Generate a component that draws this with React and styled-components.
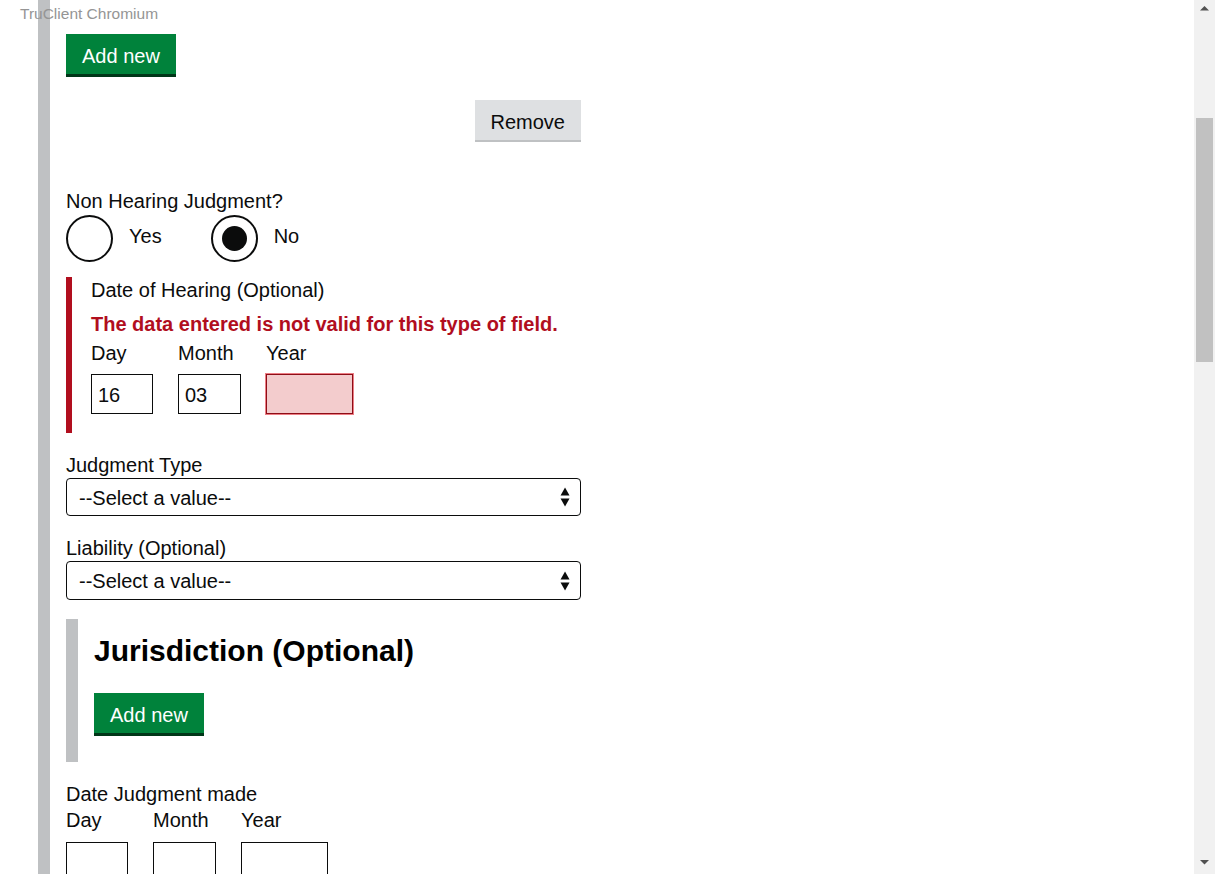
import React from "react";
import styled, { createGlobalStyle } from "styled-components";

const GlobalStyle = createGlobalStyle`
  html, body {
    margin: 0;
    padding: 0;
    height: 100%;
    overflow: hidden;
    background: #ffffff;
  }
  body {
    font-family: "Liberation Sans", Arial, sans-serif;
    color: #0b0c0c;
  }
  #root { height: 100%; }
  * { box-sizing: border-box; }
`;

const Page = styled.div`
  display: flex;
  height: 100vh;
  overflow: hidden;
`;

const Main = styled.main`
  flex: 1;
  position: relative;
  padding-left: 38px;
  overflow: hidden;
`;

const Watermark = styled.div`
  position: absolute;
  left: 20px;
  top: 5px;
  font-size: 15.5px;
  line-height: 18px;
  color: #959595;
  z-index: 2;
  pointer-events: none;
`;

const Collection = styled.div`
  height: 100%;
  border-left: 12px solid #bfc1c3;
  padding: 34px 0 0 16px;
`;

const Column = styled.div`
  width: 515px;
  display: flex;
  flex-direction: column;
  align-items: flex-start;
`;

const PrimaryButton = styled.button`
  height: 40px;
  margin-top: ${(p) => p.$mt || 0}px;
  padding: 4px 16px 0;
  border: none;
  border-radius: 0;
  background: #00823b;
  box-shadow: 0 3px 0 #003618;
  color: #ffffff;
  font-family: inherit;
  font-size: 20px;
  line-height: 36px;
  cursor: pointer;
`;

const ButtonRow = styled.div`
  align-self: stretch;
  display: flex;
  justify-content: flex-end;
  margin-top: ${(p) => p.$mt || 0}px;
`;

const SecondaryButton = styled.button`
  height: 40px;
  padding: 4px 16px 0;
  border: none;
  border-radius: 0;
  background: #dee0e2;
  box-shadow: 0 2px 0 #bfc1c3;
  color: #0b0c0c;
  font-family: inherit;
  font-size: 20px;
  line-height: 36px;
  cursor: pointer;
`;

const Label = styled.div`
  margin-top: ${(p) => p.$mt || 0}px;
  font-size: 20px;
  line-height: 25px;
  color: #0b0c0c;
`;

const RadioGroup = styled.div`
  height: 48px;
  display: flex;
  align-items: center;
  gap: 49px;
`;

const RadioItem = styled.label`
  display: flex;
  align-items: center;
  gap: 16px;
  font-size: 20px;
  line-height: 25px;
`;

const RadioText = styled.span`
  padding-bottom: 4px;
`;

const RadioCircle = styled.span`
  width: 47px;
  height: 47px;
  border: 2px solid #0b0c0c;
  border-radius: 50%;
  display: flex;
  align-items: center;
  justify-content: center;
  background: #fff;

  &::after {
    content: "";
    width: 25px;
    height: 25px;
    border-radius: 50%;
    background: #0b0c0c;
    display: ${(p) => (p.$checked ? "block" : "none")};
  }
`;

const ErrorGroup = styled.div`
  align-self: stretch;
  margin-top: 15px;
  border-left: 6px solid #b10e1e;
  padding: 1px 0 19px 19px;
`;

const ErrorMessage = styled.div`
  margin-top: 9px;
  font-size: 20px;
  line-height: 25px;
  font-weight: 700;
  color: #b10e1e;
`;

const DateRow = styled.div`
  display: flex;
  gap: 25px;
  margin-top: ${(p) => p.$mt || 0}px;
`;

const DateItem = styled.div`
  display: flex;
  flex-direction: column;
  gap: ${(p) => p.$gap}px;
`;

const TextInput = styled.input`
  width: ${(p) => p.$w}px;
  height: 40px;
  margin: 0;
  padding: 2px 6px 0;
  border: 1px solid ${(p) => (p.$error ? "#8e0d17" : "#0b0c0c")};
  box-shadow: ${(p) => (p.$error ? "0 0 0 1px #ec7d84" : "none")};
  border-radius: 0;
  background: ${(p) => (p.$error ? "#f3cccd" : "#ffffff")};
  font-family: inherit;
  font-size: 20px;
  color: #0b0c0c;
  outline: none;
`;

const SelectBox = styled.div`
  align-self: stretch;
  height: ${(p) => p.$h}px;
  display: flex;
  align-items: center;
  justify-content: space-between;
  padding: 2px 10px 0 12px;
  border: 1px solid #0b0c0c;
  border-radius: 4px;
  font-size: 20px;
  line-height: 25px;
  color: #0b0c0c;
  background: #ffffff;

  svg {
    margin-top: -2px;
  }
`;

const SubCollection = styled.section`
  align-self: stretch;
  margin-top: ${(p) => p.$mt || 0}px;
  border-left: 12px solid #bfc1c3;
  padding: 13px 0 29px 16px;
  display: flex;
  flex-direction: column;
  align-items: flex-start;
`;

const Heading = styled.h2`
  margin: 0;
  font-size: 30px;
  line-height: 37.5px;
  font-weight: 700;
  color: #000000;
`;

const ScrollBar = styled.div`
  width: 21px;
  flex: none;
  height: 100%;
  background: #f1f1f1;
  display: flex;
  flex-direction: column;
  align-items: center;
`;

const ScrollArrow = styled.svg`
  width: 17px;
  height: 17px;
  flex: none;
  display: block;
`;

const ScrollThumb = styled.div`
  width: 17px;
  height: ${(p) => p.$h}px;
  margin-top: ${(p) => p.$top}px;
  background: #c1c1c1;
`;

const ScrollSpacer = styled.div`
  flex: 1;
`;

function SelectArrows() {
  return (
    <svg width="10" height="20" viewBox="0 0 10 20" aria-hidden="true">
      <polygon points="0.5,8.5 5,0.5 9.5,8.5" fill="#0b0c0c" />
      <polygon points="0.5,11.5 5,19.5 9.5,11.5" fill="#0b0c0c" />
    </svg>
  );
}

function Select({ value, h = 38 }) {
  return (
    <SelectBox role="combobox" $h={h}>
      <span>{value}</span>
      <SelectArrows />
    </SelectBox>
  );
}

function DateInputs({ mt, gap, values = {}, errorYear }) {
  return (
    <DateRow $mt={mt}>
      <DateItem $gap={gap}>
        <Label>Day</Label>
        <TextInput $w={62} defaultValue={values.day || ""} />
      </DateItem>
      <DateItem $gap={gap}>
        <Label>Month</Label>
        <TextInput $w={63} defaultValue={values.month || ""} />
      </DateItem>
      <DateItem $gap={gap}>
        <Label>Year</Label>
        <TextInput $w={87} $error={errorYear} defaultValue={values.year || ""} />
      </DateItem>
    </DateRow>
  );
}

export default function App() {
  return (
    <>
      <GlobalStyle />
      <Page>
        <Main>
          <Watermark>TruClient Chromium</Watermark>
          <Collection>
            <Column>
              <PrimaryButton>Add new</PrimaryButton>
              <ButtonRow $mt={26}>
                <SecondaryButton>Remove</SecondaryButton>
              </ButtonRow>

              <Label $mt={49}>Non Hearing Judgment?</Label>
              <RadioGroup>
                <RadioItem>
                  <RadioCircle />
                  <RadioText>Yes</RadioText>
                </RadioItem>
                <RadioItem>
                  <RadioCircle $checked />
                  <RadioText>No</RadioText>
                </RadioItem>
              </RadioGroup>

              <ErrorGroup>
                <Label>Date of Hearing (Optional)</Label>
                <ErrorMessage>The data entered is not valid for this type of field.</ErrorMessage>
                <DateInputs mt={4} gap={8} values={{ day: "16", month: "03" }} errorYear />
              </ErrorGroup>

              <Label $mt={20}>Judgment Type</Label>
              <Select value="--Select a value--" h={38} />

              <Label $mt={20}>Liability (Optional)</Label>
              <Select value="--Select a value--" h={39} />

              <SubCollection $mt={19}>
                <Heading>Jurisdiction (Optional)</Heading>
                <PrimaryButton $mt={23}>Add new</PrimaryButton>
              </SubCollection>

              <Label $mt={20}>Date Judgment made</Label>
              <DateInputs mt={1} gap={9} />
            </Column>
          </Collection>
        </Main>
        <ScrollBar>
          <ScrollArrow viewBox="0 0 17 17">
            <polygon points="4,10.5 8.5,6 13,10.5" fill="#505050" />
          </ScrollArrow>
          <ScrollThumb $top={101} $h={244} />
          <ScrollSpacer />
          <ScrollArrow viewBox="0 0 17 17">
            <polygon points="4,3 8.5,7.5 13,3" fill="#505050" />
          </ScrollArrow>
        </ScrollBar>
      </Page>
    </>
  );
}
